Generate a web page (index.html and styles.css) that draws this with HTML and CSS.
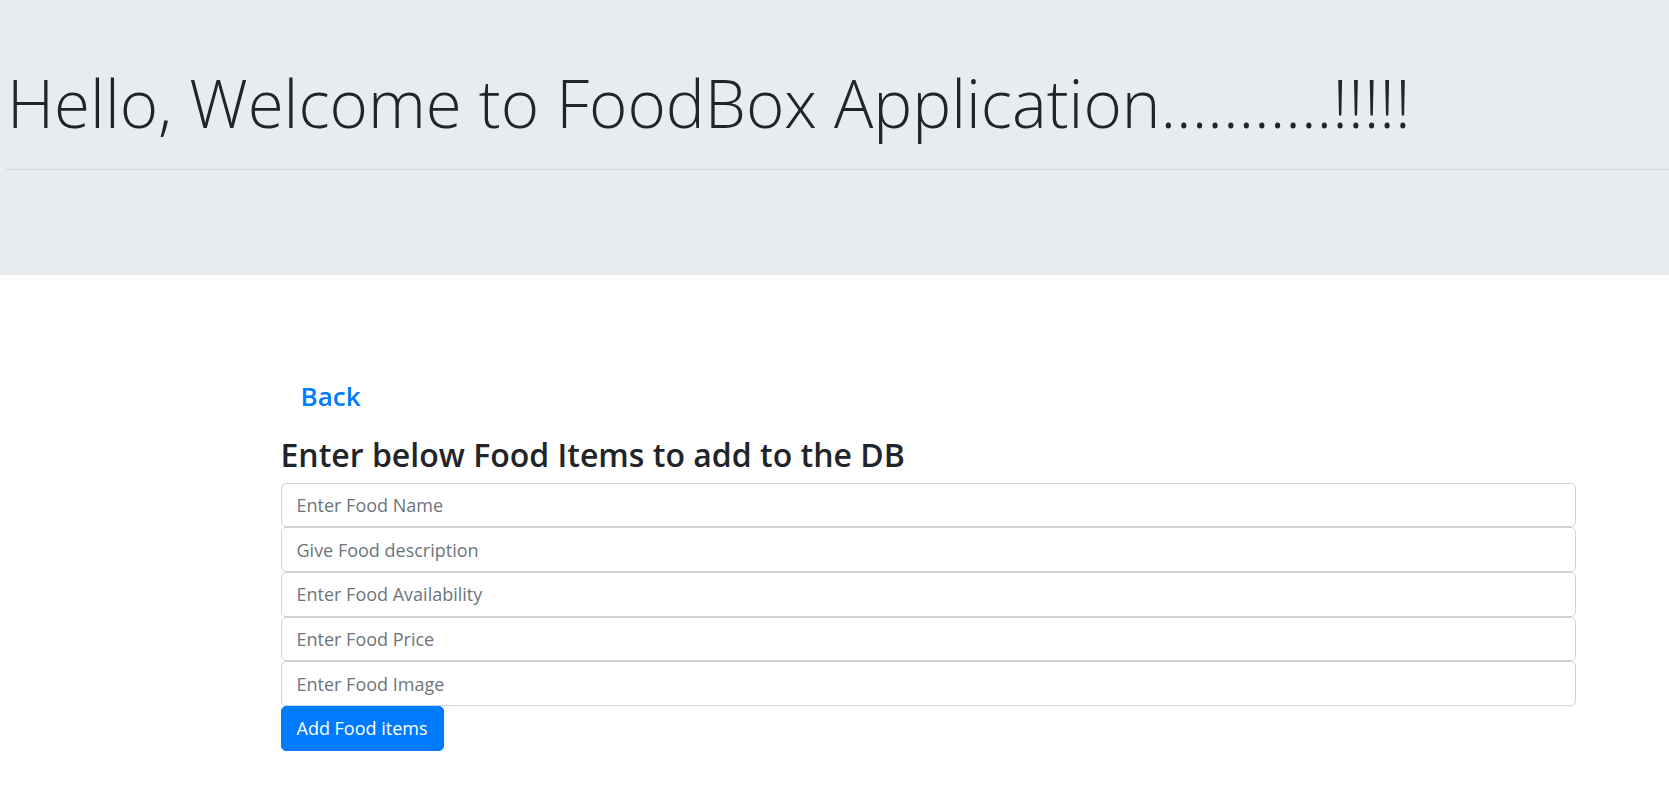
FILE: index.html
```html
<!DOCTYPE html>
<html lang="en">
<head>
<meta charset="utf-8">
<title>FoodBox</title>
<link rel="stylesheet" href="styles.css">
</head>
<body>
<header class="jumbotron">
  <h1 class="display">Hello, Welcome to FoodBox Application...........!!!!!</h1>
  <hr class="divider">
</header>
<main class="page">
  <div class="container">
    <a class="back-link" href="#">Back</a>
    <h3 class="form-title">Enter below Food Items to add to the DB</h3>
    <form class="food-form">
      <input class="form-control" type="text" placeholder="Enter Food Name">
      <input class="form-control" type="text" placeholder="Give Food description">
      <input class="form-control" type="text" placeholder="Enter Food Availability">
      <input class="form-control" type="text" placeholder="Enter Food Price">
      <input class="form-control" type="text" placeholder="Enter Food Image">
      <button class="btn-primary" type="submit">Add Food items</button>
    </form>
  </div>
</main>
</body>
</html>
```
FILE: styles.css
```css
* { box-sizing: border-box; }

html, body {
  margin: 0;
  padding: 0;
  background: #fff;
  color: #212529;
  font-family: "Open Sans", "Noto Sans", "Liberation Sans", sans-serif;
}

.jumbotron {
  background: #e9ecef;
  height: 275px;
  padding: 64.3px 0 0 6px;
}

.display {
  margin: 0;
  font-size: 65.5px;
  line-height: 1.2;
  font-weight: 300;
  color: #212529;
  padding-left: 1px;
  white-space: nowrap;
}

.divider {
  margin: 26px 0 0 0;
  border: 0;
  border-top: 1px solid #d2d5d9;
  height: 0;
}

.page {
  padding-top: 103px;
}

.container {
  margin-left: 280.5px;
  width: 1295.5px;
  display: flex;
  flex-direction: column;
}

.back-link {
  display: block;
  align-self: flex-start;
  padding-left: 20px;
  font-size: 26px;
  line-height: 36px;
  font-weight: 600;
  color: #007bff;
  text-decoration: none;
}

.form-title {
  margin: 20.6px 0 8px 0;
  font-size: 32px;
  line-height: 40px;
  font-weight: 600;
  color: #212529;
}

.food-form {
  display: flex;
  flex-direction: column;
  align-items: flex-start;
}

.form-control {
  display: block;
  width: 100%;
  height: 44.7px;
  margin: 0;
  padding: 0 15px;
  border: 1px solid #ced4da;
  border-radius: 5px;
  background: #fff;
  font-family: inherit;
  font-size: 18px;
  color: #495057;
  outline: none;
}

.form-control::placeholder {
  color: #6c757d;
  opacity: 1;
}

.btn-primary {
  height: 44.7px;
  padding: 0 15px;
  border: 1px solid #007bff;
  border-radius: 5px;
  background: #007bff;
  color: #fff;
  font-family: inherit;
  font-size: 18px;
  cursor: pointer;
}
```
